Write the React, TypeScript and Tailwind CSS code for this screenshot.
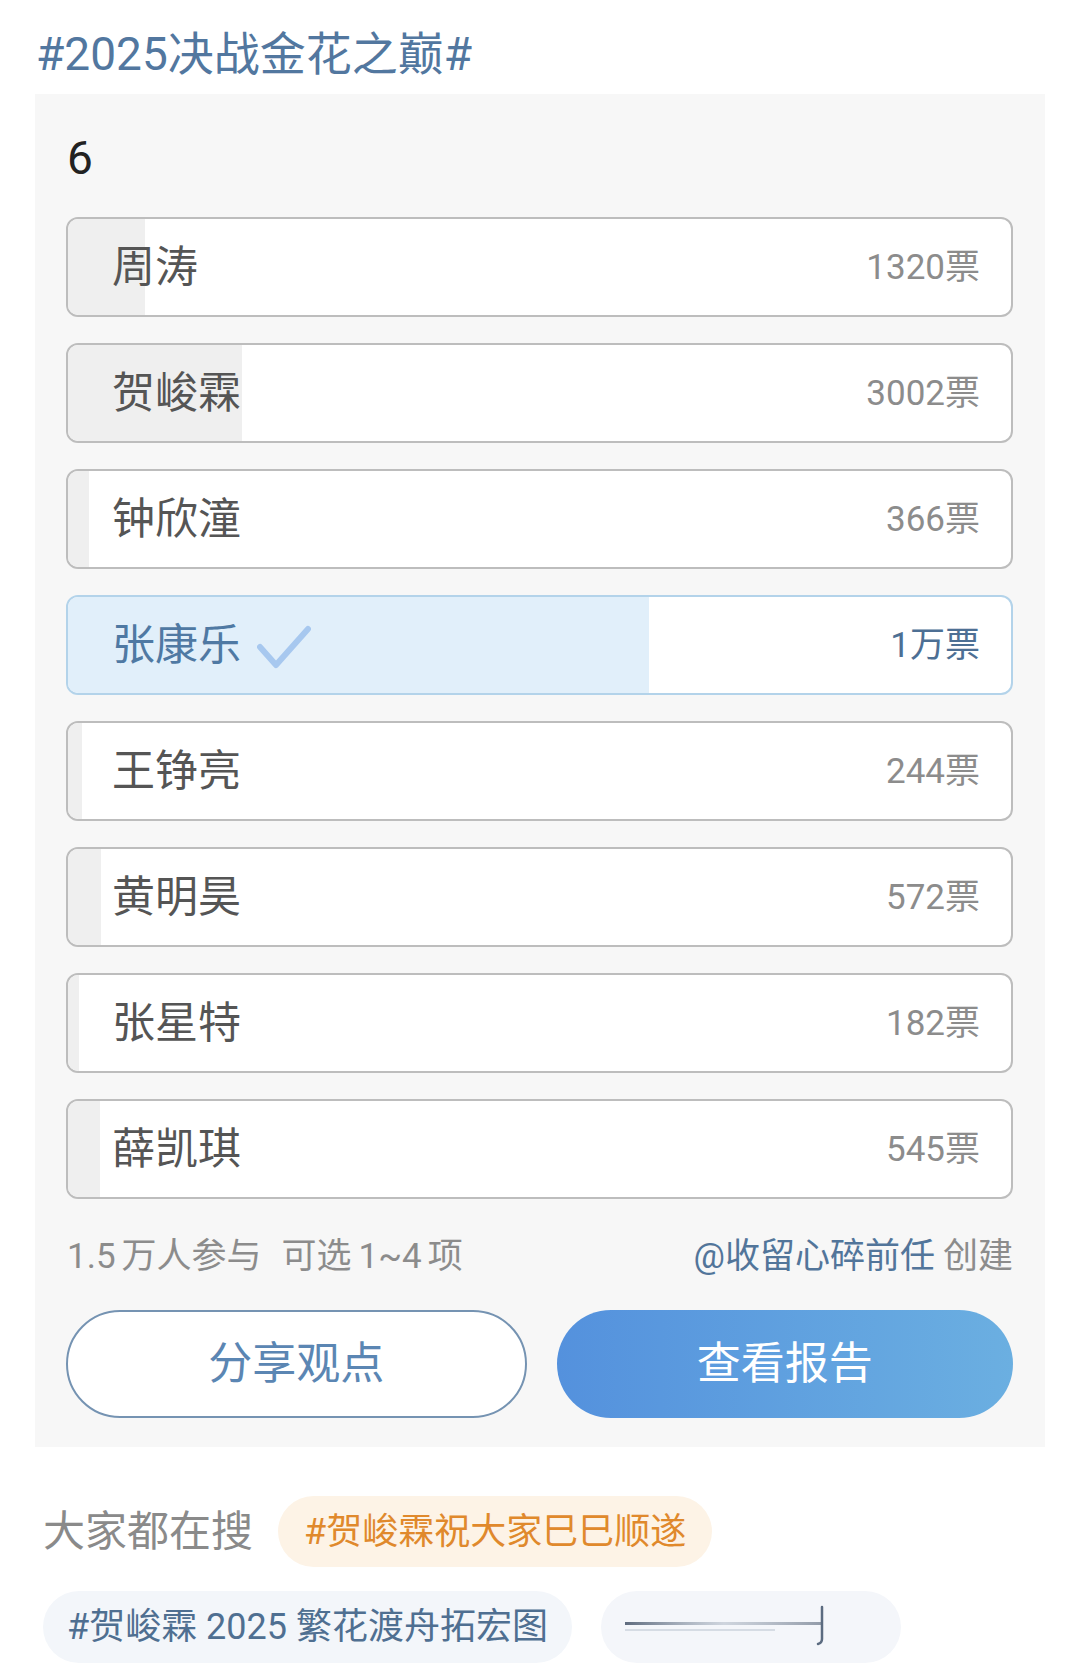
import React from 'react';

const options = [
  { name: '周涛', votes: 1320, label: '1320' },
  { name: '贺峻霖', votes: 3002, label: '3002' },
  { name: '钟欣潼', votes: 366, label: '366' },
  { name: '张康乐', votes: 10000, label: '1万', picked: true },
  { name: '王铮亮', votes: 244, label: '244' },
  { name: '黄明昊', votes: 572, label: '572' },
  { name: '张星特', votes: 182, label: '182' },
  { name: '薛凯琪', votes: 545, label: '545' },
];

const total = options.reduce((s, o) => s + o.votes, 0);

const cjk = { fontFamily: 'Roboto, "Noto Sans CJK SC", sans-serif' };

const Check = () => (
  <svg width="54" height="44" viewBox="0 0 54 44" className="ml-[16px] mt-[4px]">
    <path d="M3 22 L19 40 L51 4" fill="none" stroke="#a7c8ef" strokeWidth="6" strokeLinecap="round" strokeLinejoin="round" />
  </svg>
);

const OptionRow = ({ o }: any) => {
  const pct = (o.votes / total) * 100;
  return (
    <div
      className={`relative h-[100px] rounded-[12px] border-2 overflow-hidden ${
        o.picked ? 'border-[#b3d3ea] bg-white' : 'border-[#bdbdbd] bg-white'
      }`}
    >
      {/* vote share bar */}
      <div
        className={`absolute left-0 top-0 bottom-0 ${o.picked ? 'bg-[#e1effa]' : 'bg-[#efefef]'}`}
        style={{ width: `${pct}%` }}
      />
      <div className="relative h-full flex items-center justify-between pl-[44px] pr-[31px]">
        <div className="flex items-center">
          <span className={`text-[43px] leading-none ${o.picked ? 'text-[#4f79a3]' : 'text-[#555555]'}`}>{o.name}</span>
          {o.picked && <Check />}
        </div>
        <span className={`text-[35px] leading-none ${o.picked ? 'text-[#4d6f94]' : 'text-[#8c8c8c]'}`}>
          {o.label}票
        </span>
      </div>
    </div>
  );
};

export default function App() {
  return (
    <div className="w-[1079px] h-[1672px] bg-white overflow-hidden" style={cjk}>
      <div className="h-[94px] pl-[36px] pt-[24px]">
        <span className="text-[46px] leading-[60px] text-[#52779f]">#2025决战金花之巅#</span>
      </div>

      <div className="ml-[35px] w-[1010px] bg-[#f7f7f7] pl-[31px] pr-[32px] pt-[34px] pb-[29px]">
        <div className="text-[46px] leading-[60px] text-[#222222] pl-[1px]">6</div>

        <div className="mt-[29px] flex flex-col gap-[26px]">
          {options.map((o) => (
            <OptionRow key={o.name} o={o} />
          ))}
        </div>

        <div className="mt-[37px] h-[40px] flex items-center justify-between text-[35px] leading-none">
          <div className="text-[#8c8c8c] pl-[1px]">
            1.5<span className="ml-[6px]">万人参与</span>
            <span className="ml-[20px]">可选</span>
            <span className="ml-[7px]">1~4</span>
            <span className="ml-[6px]">项</span>
          </div>
          <div>
            <span className="text-[#52759a]">@收留心碎前任</span>
            <span className="ml-[8px] text-[#8c8c8c]">创建</span>
          </div>
        </div>

        <div className="mt-[34px] flex gap-[30px]">
          <button className="flex-1 h-[108px] rounded-full border-2 border-[#7593b2] bg-white text-[44px] text-[#5b86b3]">
            分享观点
          </button>
          <button className="flex-1 h-[108px] rounded-full bg-gradient-to-r from-[#5491dd] to-[#6bafe1] text-[44px] text-white">
            查看报告
          </button>
        </div>
      </div>

      <div className="pl-[43px] mt-[49px] flex items-center gap-[25px]">
        <span className="text-[42px] leading-none text-[#8a8a8a]">大家都在搜</span>
        <span className="h-[71px] px-[26px] rounded-full bg-[#fdf3e6] flex items-center text-[36px] text-[#e0892c]">
          #贺峻霖祝大家巳巳顺遂
        </span>
      </div>

      <div className="pl-[43px] mt-[24px] flex items-center gap-[29px]">
        <span className="h-[72px] px-[24px] rounded-full bg-[#f3f6fa] flex items-center text-[36px] text-[#4f6f91]">
          #贺峻霖 2025 繁花渡舟拓宏图
        </span>
        <span className="h-[72px] w-[300px] rounded-full bg-[#f4f6fa] flex items-center pl-[22px]">
          <svg width="210" height="44" viewBox="0 0 210 44">
            <defs>
              <linearGradient id="fade" x1="0" x2="1" y1="0" y2="0">
                <stop offset="0" stopColor="#4e5c70" stopOpacity="0.9" />
                <stop offset="0.5" stopColor="#8896a8" stopOpacity="0.35" />
                <stop offset="1" stopColor="#4e5c70" stopOpacity="0.6" />
              </linearGradient>
            </defs>
            <rect x="2" y="17" width="198" height="3" fill="url(#fade)" />
            <rect x="2" y="24" width="150" height="2" fill="#b7c1ce" opacity="0.5" />
            <path d="M199 2 L199 34 Q199 38 195 39" fill="none" stroke="#5b6b80" strokeWidth="2.5" strokeLinecap="round" />
          </svg>
        </span>
      </div>
    </div>
  );
}
